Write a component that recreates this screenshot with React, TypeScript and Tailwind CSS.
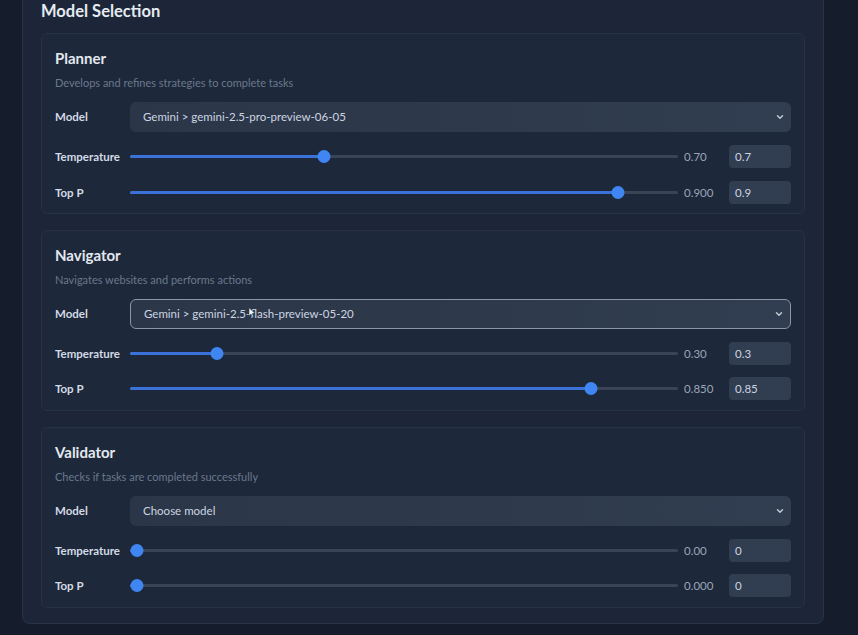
import React from "react";

type Slot = {
  title: string;
  desc: string;
  model: string;
  focused?: boolean;
  cursor?: boolean;
  temp: number;
  topP: number;
};

const slots: Slot[] = [
  {
    title: "Planner",
    desc: "Develops and refines strategies to complete tasks",
    model: "Gemini > gemini-2.5-pro-preview-06-05",
    temp: 0.7,
    topP: 0.9,
  },
  {
    title: "Navigator",
    desc: "Navigates websites and performs actions",
    model: "Gemini > gemini-2.5-flash-preview-05-20",
    focused: true,
    cursor: true,
    temp: 0.3,
    topP: 0.85,
  },
  {
    title: "Validator",
    desc: "Checks if tasks are completed successfully",
    model: "Choose model",
    temp: 0,
    topP: 0,
  },
];

// fake range input, thumb stays inside the track like the native one
function Slider({ value, max }: { value: number; max: number }) {
  const pct = value / max;
  const pos = `calc(6.5px + ${pct} * (100% - 13px))`;
  return (
    <div className="relative h-[13px] flex-1">
      <div className="absolute left-0 right-0 top-[5px] h-[3px] rounded-full bg-[#3a4456]" />
      <div
        className="absolute left-0 top-[5px] h-[3px] rounded-full bg-[#3b72d8]"
        style={{ width: pos }}
      />
      <div
        className="absolute top-0 h-[13px] w-[13px] -translate-x-1/2 rounded-full bg-[#3f86f2]"
        style={{ left: pos }}
      />
    </div>
  );
}

function ParamRow({
  label,
  value,
  max,
  digits,
  className,
}: {
  label: string;
  value: number;
  max: number;
  digits: number;
  className?: string;
}) {
  return (
    <div className={"flex h-[23px] items-center " + (className ?? "")}>
      <span className="w-[75px] shrink-0 text-[11.5px] font-bold text-[#d3dae5]">
        {label}
      </span>
      <Slider value={value} max={max} />
      <span className="ml-[6px] w-[45px] shrink-0 text-[11.5px] text-[#9aa6b8]">
        {value.toFixed(digits)}
      </span>
      <div className="flex h-[23px] w-[62px] shrink-0 items-center rounded-[4px] bg-[#313d51] pl-[6px] text-[11.5px] text-[#ccd4e0]">
        {String(value)}
      </div>
    </div>
  );
}

function SlotCard({ s, first }: { s: Slot; first?: boolean }) {
  return (
    <div className="h-[181px] rounded-md border border-[#263245] bg-[#1d283a] px-[13px] pt-[14px]">
      <h3 className="text-[15px] leading-[20px] font-bold text-[#e3e8ef]">
        {s.title}
      </h3>
      <p className="mt-[7px] text-[11px] leading-[16px] text-[#6b788d]">{s.desc}</p>

      <div className="mt-[11px] flex h-[30px] items-center">
        <span className="w-[75px] shrink-0 text-[11.5px] font-bold text-[#d3dae5]">
          Model
        </span>
        <div
          className={
            "relative flex h-[30px] flex-1 items-center justify-between rounded-md bg-gradient-to-r from-[#2b3648] to-[#313d50] pl-[13px] pr-[6px] " +
            (s.focused ? "border border-[#8b95a4] pl-[12px]" : "")
          }
        >
          <span className="text-[11.5px] text-[#cdd5e1]">{s.model}</span>
          <svg
            viewBox="0 0 24 24"
            className="h-[10px] w-[10px] text-[#c3cad6]"
            fill="none"
            stroke="currentColor"
            strokeWidth="3.5"
            strokeLinecap="round"
            strokeLinejoin="round"
          >
            <path d="M6 9l6 6 6-6" />
          </svg>

          {/* mouse pointer sitting over the text */}
          {s.cursor ? (
            <svg
              viewBox="0 0 12 18"
              className="absolute left-[117px] top-[7px] h-[11px] w-[8px]"
            >
              <path
                d="M1 1v14l3.5-3.5 2.5 5.5 2-1-2.5-5.2H11z"
                fill="#f3f5f8"
                stroke="#1d2636"
                strokeWidth="1"
              />
            </svg>
          ) : null}
        </div>
      </div>

      <ParamRow label="Temperature" value={s.temp} max={2} digits={2} className="mt-[13px]" />
      <ParamRow
        label="Top P"
        value={s.topP}
        max={1}
        digits={3}
        className={first ? "mt-[13px]" : "mt-[12px]"}
      />
    </div>
  );
}

export default function App() {
  return (
    <div
      className="h-[635px] w-full overflow-hidden bg-[#151d2c] pl-[22px]"
      style={{ fontFamily: 'Lato, "Noto Sans", sans-serif' }}
    >
      <div className="w-[802px] rounded-b-lg border border-t-0 border-[#283346] bg-[#1c2638] px-[18px] pb-[15px]">
        <h2 className="text-[16.5px] leading-[22px] font-bold text-[#e6ebf2]">
          Model Selection
        </h2>
        <div className="mt-[11px] flex flex-col gap-4">
          {slots.map((s, i) => (
            <SlotCard key={s.title} s={s} first={i === 0} />
          ))}
        </div>
      </div>
    </div>
  );
}
